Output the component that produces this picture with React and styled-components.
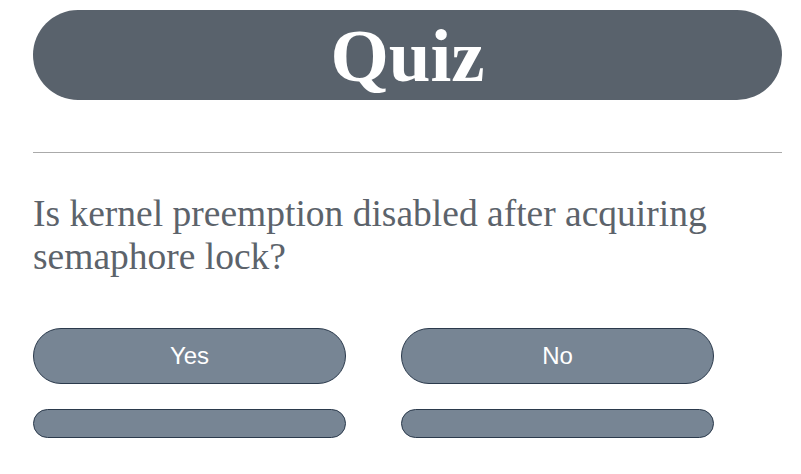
import styled, { createGlobalStyle } from "styled-components";

const GlobalStyle = createGlobalStyle`
  body {
    margin: 0;
    background: #ffffff;
  }
`;

const answers = [
  { id: 1, label: "Yes" },
  { id: 2, label: "No" },
  { id: 3, label: "" },
  { id: 4, label: "" },
];

const App = () => {
  return (
    <Page>
      <GlobalStyle />
      <Header>
        <Title>Quiz</Title>
      </Header>
      <Divider />
      <Question>Is kernel preemption disabled after acquiring semaphore lock?</Question>
      <Answers>
        {answers.map((a) => (
          <AnswerButton key={a.id} $empty={!a.label}>
            {a.label}
          </AnswerButton>
        ))}
      </Answers>
    </Page>
  );
};

const Page = styled.div`
  width: 749px;
  padding: 10px 0 0 33px;
`;

const Header = styled.header`
  height: 90px;
  background-color: #59626c;
  border-radius: 45px;
  display: flex;
  align-items: center;
  justify-content: center;
`;

const Title = styled.h1`
  margin: 0;
  color: #ffffff;
  font-family: "Liberation Serif", "Times New Roman", serif;
  font-weight: bold;
  font-size: 75px;
  line-height: 1;
`;

const Divider = styled.hr`
  margin: 52px 0 0 0;
  border: 0;
  border-top: 1px solid #aaaaaa;
`;

const Question = styled.p`
  margin: 39px 0 0 0;
  color: #5c636b;
  font-family: "Liberation Serif", "Times New Roman", serif;
  font-size: 37.5px;
  line-height: 43px;
  width: 700px;
`;

const Answers = styled.div`
  margin-top: 50px;
  display: grid;
  grid-template-columns: 313px 313px;
  column-gap: 55px;
  row-gap: 25px;
`;

const AnswerButton = styled.button`
  height: ${(p) => (p.$empty ? "29px" : "56px")};
  border-radius: ${(p) => (p.$empty ? "15px" : "28px")};
  background-color: #778594;
  border: 1px solid #2b3a4c;
  color: #ffffff;
  font-family: "Liberation Sans", Arial, sans-serif;
  font-size: 24px;
  padding: 0;
  cursor: pointer;
`;

export default App;
